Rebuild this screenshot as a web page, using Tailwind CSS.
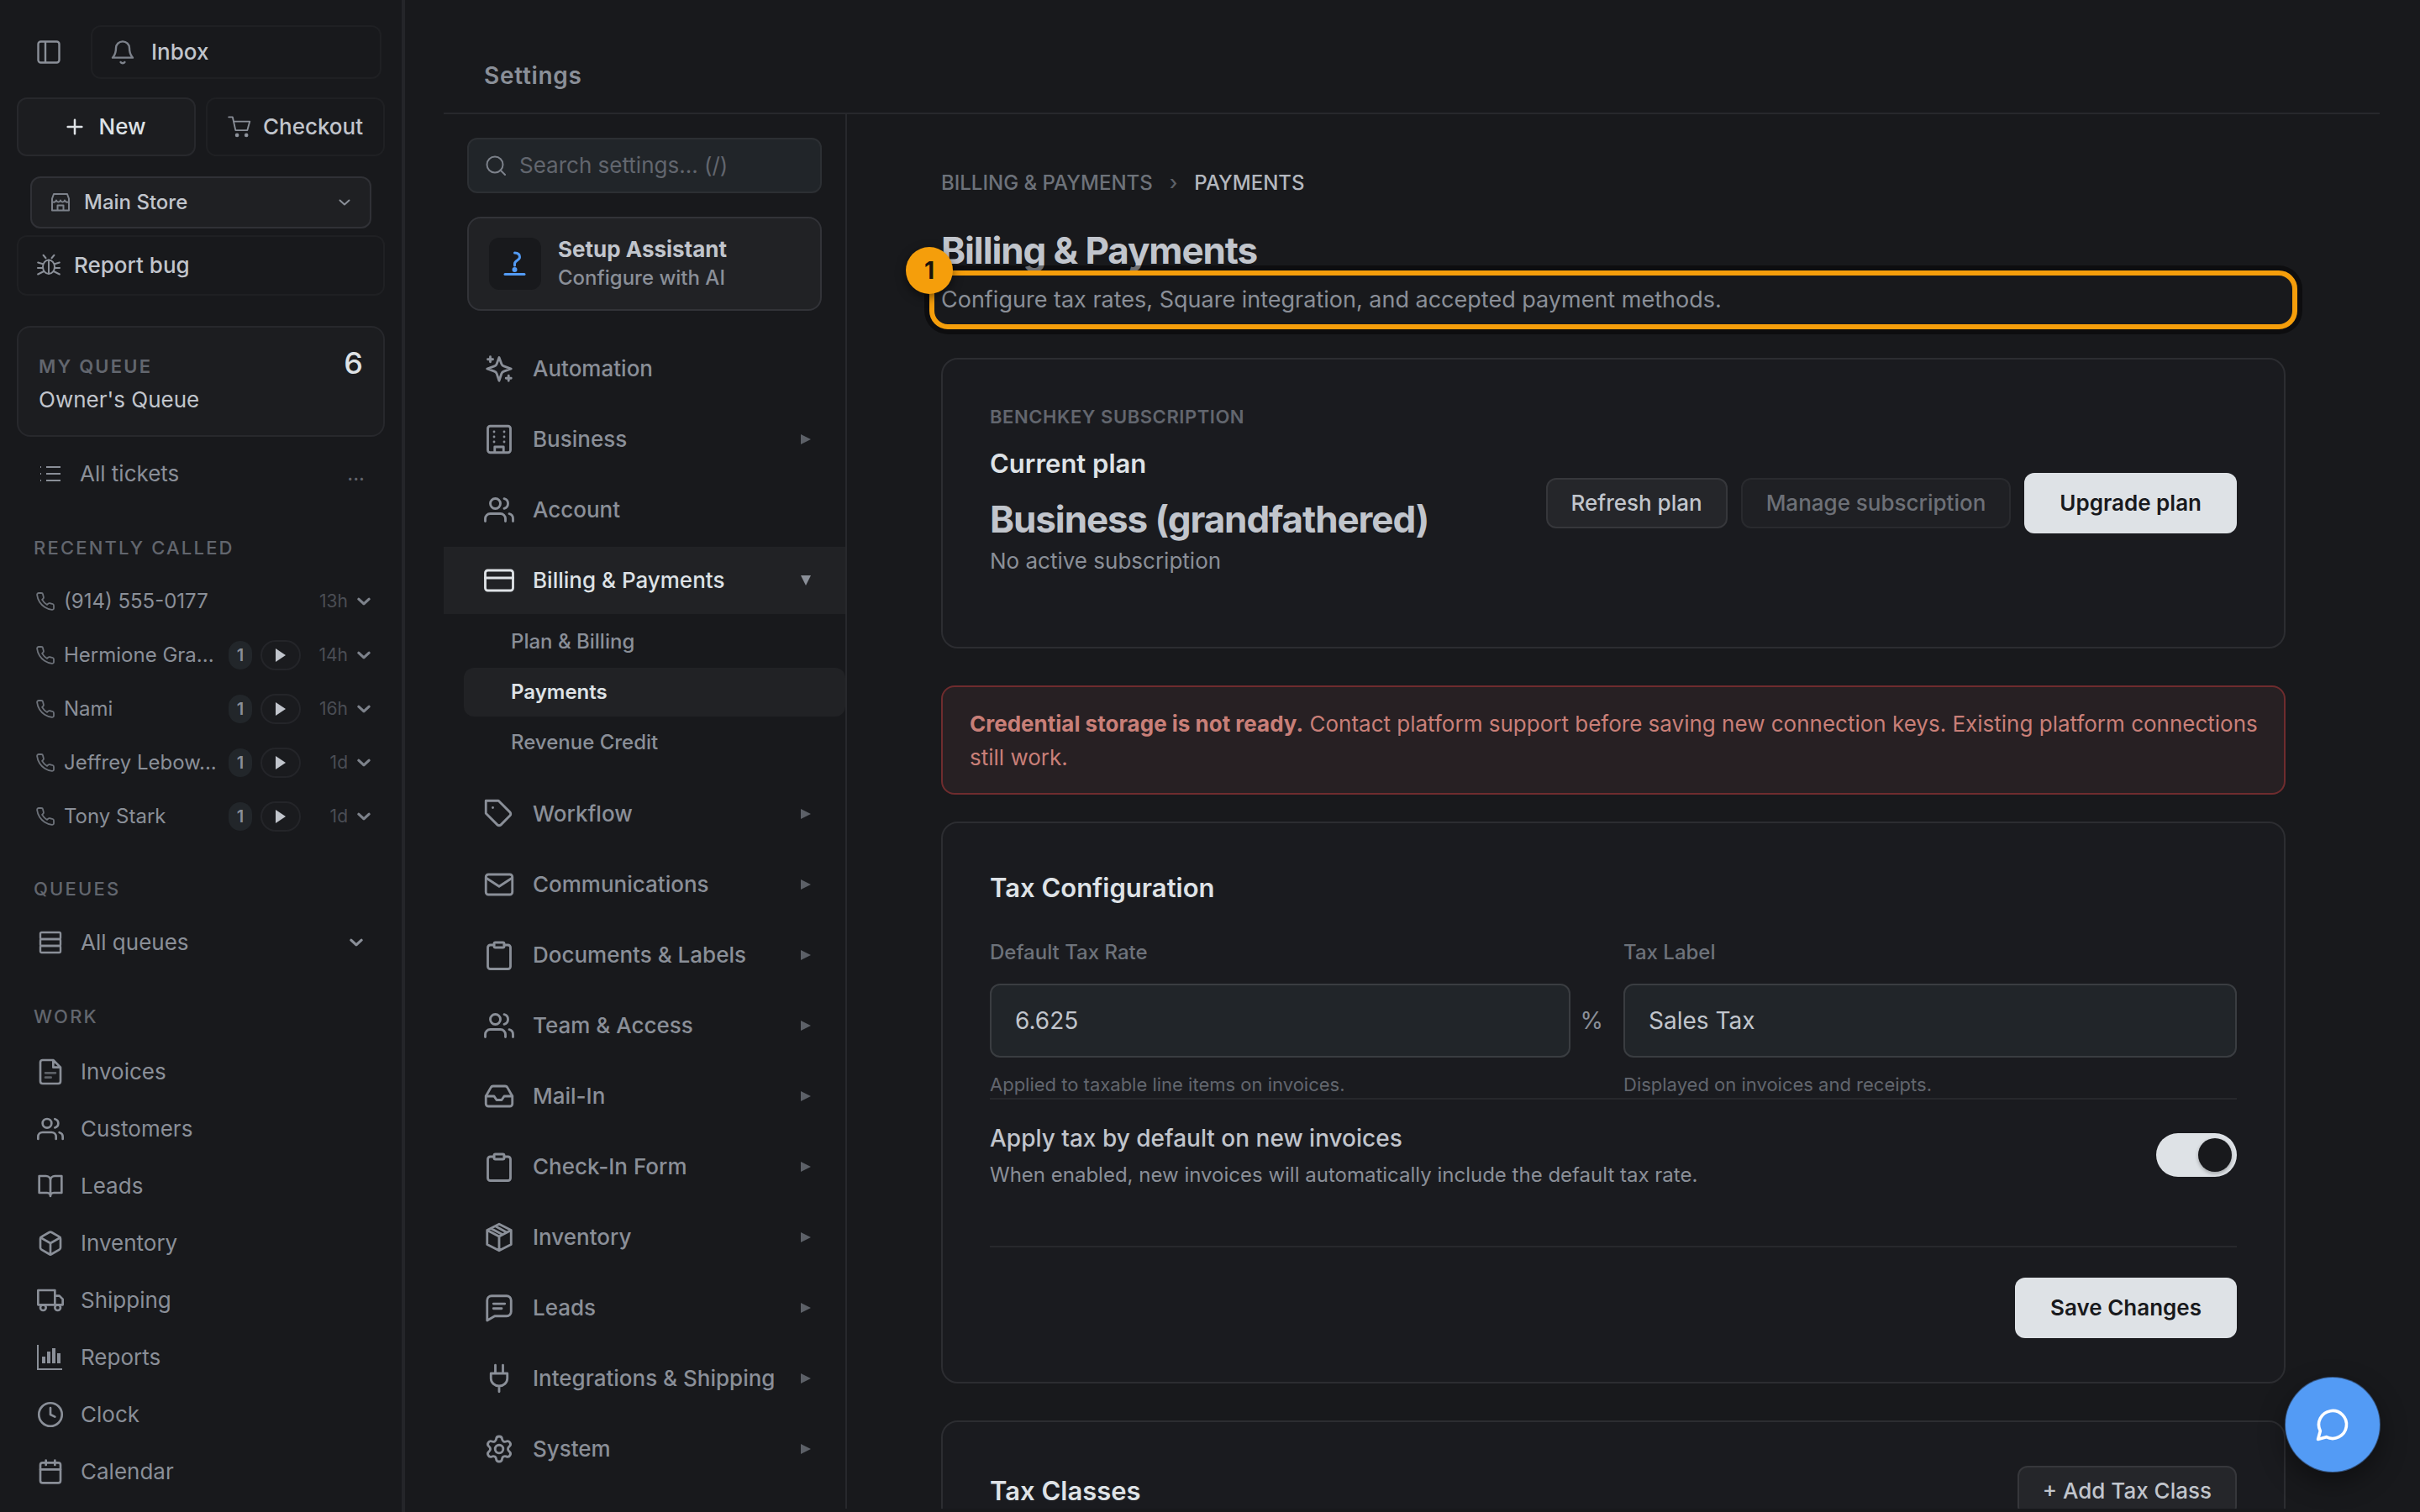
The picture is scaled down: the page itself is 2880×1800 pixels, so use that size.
<!DOCTYPE html>
<html lang="en">
<head>
<meta charset="utf-8">
<meta name="viewport" content="width=device-width, initial-scale=1">
<title>Billing &amp; Payments – Settings</title>
<script src="https://cdn.jsdelivr.net/npm/@tailwindcss/browser@4"></script>
</head>
<body class="bg-[#18191c] font-[Inter,sans-serif] text-[26px] leading-9 text-[#8a8f98] antialiased">

<!-- Icon sprite -->
<svg class="hidden" aria-hidden="true">
  <symbol id="panel" viewBox="0 0 28 28"><rect x="1.500" y="1.500" width="25" height="25" rx="3"/><path d="M10 2v24"/></symbol>
  <symbol id="bell" viewBox="0 0 24 24"><path d="M6 8.500a6 6 0 0 1 12 0c0 5.500 1.500 6.500 3 8.500H3c1.500-2 3-3 3-8.500M10.200 21a2.200 2.200 0 0 0 3.600 0"/></symbol>
  <symbol id="plus" viewBox="0 0 24 24"><path d="M12 2v20M2 12h20"/></symbol>
  <symbol id="cart" viewBox="0 0 24 24"><path d="M1 2h4l3 13.500h12L22.500 6.500H6.200"/><circle cx="9.500" cy="20.500" r="1.200" fill="currentColor"/><circle cx="19" cy="20.500" r="1.200" fill="currentColor"/></symbol>
  <symbol id="store" viewBox="0 0 24 24"><path d="M4 2h16l2 5.500v3.500a3.300 3.300 0 0 1-5-1.500c-1 2.500-4 2.500-5 0-1 2.500-4 2.500-5 0a3.300 3.300 0 0 1-5 1.500V7.500zM2 10v11.500h20V10M8.500 21.500v-6h7v6"/></symbol>
  <symbol id="bug" viewBox="0 0 24 24"><ellipse cx="12" cy="13.500" rx="6" ry="7"/><path d="M12 6.500v14M9 4.500 6.500 1.500M15 4.500l2.500-3M6 10.500 1 9M18 10.500 23 9M6 14.500H.800M18 14.500h5.200M7 18l-6 3M17 18l6 3"/></symbol>
  <symbol id="list" viewBox="0 0 26 20"><path d="M8 2h17M8 10h17M8 18h17M1 2h1M1 10h1M1 18h1"/></symbol>
  <symbol id="phone" viewBox="0 0 24 24"><path d="M22 16.920v3a2 2 0 0 1-2.180 2 19.790 19.790 0 0 1-8.630-3.070 19.500 19.500 0 0 1-6-6 19.790 19.790 0 0 1-3.070-8.670A2 2 0 0 1 4.110 2h3a2 2 0 0 1 2 1.720c.127.960.361 1.903.700 2.810a2 2 0 0 1-.450 2.110L8.090 9.910a16 16 0 0 0 6 6l1.270-1.270a2 2 0 0 1 2.110-.450c.907.339 1.850.573 2.810.700A2 2 0 0 1 22 16.920z"/></symbol>
  <symbol id="chev" viewBox="0 0 16 16"><path d="m2.500 5.500 5.500 5 5.500-5"/></symbol>
  <symbol id="stack" viewBox="0 0 28 28"><rect x="2" y="2" width="24" height="8" rx="1.500"/><rect x="2" y="10" width="24" height="8" rx="1.500"/><rect x="2" y="18" width="24" height="8" rx="1.500"/></symbol>
  <symbol id="file" viewBox="0 0 24 24"><path d="M14.500 1.500H5a2 2 0 0 0-2 2v17a2 2 0 0 0 2 2h14a2 2 0 0 0 2-2V8zM14.500 1.500V8H21"/><path d="M7.500 13h9M7.500 17h5" opacity=".6"/></symbol>
  <symbol id="users" viewBox="0 0 24 24"><path d="M17 21v-2a4 4 0 0 0-4-4H5a4 4 0 0 0-4 4v2"/><circle cx="9" cy="7" r="4"/><path d="M23 21v-2a4 4 0 0 0-3-3.870M16 3.130a4 4 0 0 1 0 7.750"/></symbol>
  <symbol id="book" viewBox="0 0 24 24"><path d="M2 3h6a4 4 0 0 1 4 4v14a3 3 0 0 0-3-3H2zM22 3h-6a4 4 0 0 0-4 4v14a3 3 0 0 1 3-3h7z"/></symbol>
  <symbol id="box" viewBox="0 0 24 24"><path d="M21 16V8a2 2 0 0 0-1-1.730l-7-4a2 2 0 0 0-2 0l-7 4A2 2 0 0 0 3 8v8a2 2 0 0 0 1 1.730l7 4a2 2 0 0 0 2 0l7-4A2 2 0 0 0 21 16z"/><path d="M3.270 6.960 12 12.010l8.730-5.050M12 22.080V12"/></symbol>
  <symbol id="truck" viewBox="0 0 24 24"><path d="M1 3h15v13H1zM16 8h4l3 3v5h-7z"/><circle cx="5.500" cy="18.500" r="2.500"/><circle cx="18.500" cy="18.500" r="2.500"/></symbol>
  <symbol id="bars" viewBox="0 0 32 32"><path d="M1 1v29h29" stroke-width="2" stroke-linecap="butt" stroke-linejoin="miter"/><path d="M6 15h4v8H6zM12 9h4v14h-4zM18 5h4v18h-4zM24 11h4v12h-4z" fill="currentColor" stroke="none"/></symbol>
  <symbol id="clock" viewBox="0 0 24 24"><circle cx="12" cy="12" r="10.300"/><path d="M12 6v6l4 2"/></symbol>
  <symbol id="cal" viewBox="0 0 24 24"><rect x="3" y="4" width="18" height="18" rx="2"/><path d="M16 2v4M8 2v4M3 10h18"/></symbol>
  <symbol id="search" viewBox="0 0 24 24"><circle cx="11" cy="11" r="9.500"/><path d="m23 23-5.500-5.500"/></symbol>
  <symbol id="assist" viewBox="0 0 32 32"><path d="M15.500 3c4 0 6 2 6 5 0 4-6 4-6 8v2"/><circle cx="15.500" cy="23" r="1.500" fill="currentColor"/><path d="M4 28.500h23"/></symbol>
  <symbol id="spark" viewBox="0 0 24 24"><path d="M12 3l1.900 5.100a3 3 0 0 0 1.800 1.800L21.500 12l-5.800 2.100a3 3 0 0 0-1.800 1.800L12 21.500l-1.900-5.600a3 3 0 0 0-1.800-1.800L2.500 12l5.800-2.100a3 3 0 0 0 1.800-1.800zM5 2.500v4M3 4.500h4M19.500 17.500v4M17.500 19.500h4"/></symbol>
  <symbol id="building" viewBox="0 0 24 24"><rect x="3" y="1.500" width="18" height="21" rx="2"/><path d="M8.500 22v-4h7v4M8 6h.010M8 10h.010M8 14h.010M16 6h.010M16 10h.010M16 14h.010"/></symbol>
  <symbol id="card" viewBox="0 0 24 24"><rect x="1" y="4" width="22" height="16" rx="2"/><path d="M1 10h22"/></symbol>
  <symbol id="tag" viewBox="0 0 24 24"><path d="M20.590 13.410l-7.170 7.170a2 2 0 0 1-2.830 0L1.500 11.500v-10h10l9.090 9.080a2 2 0 0 1 0 2.830zM7 7h.010"/></symbol>
  <symbol id="mail" viewBox="0 0 24 24"><rect x="1.500" y="4" width="21" height="16" rx="2"/><path d="M2 7l10 6.500L22 7"/></symbol>
  <symbol id="clip" viewBox="0 0 24 24"><path d="M16 4h3a2 2 0 0 1 2 2v15a2 2 0 0 1-2 2H5a2 2 0 0 1-2-2V6a2 2 0 0 1 2-2h3"/><rect x="8" y="2" width="8" height="4" rx="1"/></symbol>
  <symbol id="tray" viewBox="0 0 24 24"><path d="M22.500 12H16l-2 3h-4l-2-3H1.500"/><path d="M5.450 5.110 1.500 12v6a2 2 0 0 0 2 2h17a2 2 0 0 0 2-2v-6l-3.950-6.890A2 2 0 0 0 16.760 4H7.240a2 2 0 0 0-1.790 1.110z"/></symbol>
  <symbol id="package" viewBox="0 0 24 24"><path d="M12 1.500l9.500 4.800v11.400L12 22.500l-9.500-4.800V6.300zM2.500 6.300 12 11.300l9.500-5M12 11.300v11.200M9 3.200l9.200 4.900M5.500 5l9.300 4.900"/></symbol>
  <symbol id="message" viewBox="0 0 24 24"><path d="M6 2.500h12A3.500 3.500 0 0 1 21.500 6v9a3.500 3.500 0 0 1-3.500 3.500H8.500l-6 3.500V6A3.500 3.500 0 0 1 6 2.500zM7.500 8.700h9M7.500 12.500h6.500"/></symbol>
  <symbol id="plug" viewBox="0 0 24 24"><path d="M9 1.500V8M15 1.500V8M5.500 8h13v4a6.500 6 0 0 1-13 0zM12 18v4.500"/></symbol>
  <symbol id="gear" viewBox="0 0 24 24"><path d="M9.671 4.136a2.340 2.340 0 0 1 4.659 0 2.340 2.340 0 0 0 3.319 1.915 2.340 2.340 0 0 1 2.330 4.033 2.340 2.340 0 0 0 0 3.831 2.340 2.340 0 0 1-2.330 4.033 2.340 2.340 0 0 0-3.319 1.915 2.340 2.340 0 0 1-4.659 0 2.340 2.340 0 0 0-3.320-1.915 2.340 2.340 0 0 1-2.330-4.033 2.340 2.340 0 0 0 0-3.831A2.340 2.340 0 0 1 6.350 6.051a2.340 2.340 0 0 0 3.319-1.915"/><circle cx="12" cy="12" r="3.200"/></symbol>
  <symbol id="chat" viewBox="0 0 24 24"><path d="M7.900 20A9 9 0 1 0 4 16.100L2.500 21.500z"/></symbol>
  <symbol id="right" viewBox="0 0 12 12"><path d="M0 0v12l12-6z"/></symbol>
  <symbol id="down" viewBox="0 0 12 12"><path d="M0 0h12L6 12z"/></symbol>
</svg>

<div class="flex h-screen overflow-hidden">

  <!-- App sidebar -->
  <aside class="flex w-[482px] shrink-0 flex-col overflow-hidden border-r-4 border-[#242529] px-5 pt-[30px]">
    <div class="flex shrink-0 items-center gap-9 pr-1 pl-6">
      <button type="button" aria-label="Toggle sidebar"><svg class="size-7 fill-none stroke-current stroke-[2.400]"><use href="#panel"/></svg></button>
      <button type="button" class="flex h-16 flex-1 items-center gap-[18px] rounded-xl border-2 border-[#1f2023] px-5 font-medium text-[#c1c5cc]">
        <svg class="size-8 fill-none stroke-[#7d828b] stroke-[1.800] [stroke-linecap:round] [stroke-linejoin:round]"><use href="#bell"/></svg>Inbox</button>
    </div>

    <div class="mt-[22px] flex shrink-0 gap-3">
      <button type="button" class="flex h-[70px] flex-1 items-center justify-center gap-[18px] rounded-xl border-2 border-[#27282c] bg-[#1c1d20] font-medium text-[#dee2e6]">
        <svg class="size-5 fill-none stroke-current stroke-3 [stroke-linecap:round]"><use href="#plus"/></svg>New</button>
      <button type="button" class="flex h-[70px] flex-1 items-center justify-center gap-3.5 rounded-xl border-2 border-[#1f2023] font-medium text-[#c1c5cc]">
        <svg class="size-7 fill-none stroke-[#8a8f98] stroke-[1.600] [stroke-linecap:round] [stroke-linejoin:round]"><use href="#cart"/></svg>Checkout</button>
    </div>

    <button type="button" class="mx-4 mt-6 flex h-[62px] shrink-0 items-center rounded-xl border-2 border-[#303136] bg-[#1f2023] px-[22px] text-2xl font-medium text-[#c1c5cc]">
      <svg class="mr-4 size-6 fill-none stroke-[#7d828b] stroke-2 [stroke-linejoin:round]"><use href="#store"/></svg>Main Store
      <svg class="ml-auto size-4 fill-none stroke-[#8a8f98] stroke-2 [stroke-linecap:round] [stroke-linejoin:round]"><use href="#chev"/></svg></button>

    <button type="button" class="mt-2 flex h-[72px] shrink-0 items-center gap-4 rounded-xl border-2 border-[#1f2023] px-[22px] font-medium text-[#c1c5cc]">
      <svg class="size-7 fill-none stroke-[#8a8f98] stroke-[1.700] [stroke-linecap:round]"><use href="#bug"/></svg>Report bug</button>

    <a href="#my-queue" class="mt-9 flex h-[132px] shrink-0 items-start justify-between rounded-2xl border-2 border-[#27282c] bg-[#1c1d20] px-6 pt-5">
      <span class="flex flex-col gap-2 pt-3">
        <span class="text-[22px] leading-7 font-semibold tracking-widest text-[#62666e]">MY QUEUE</span>
        <span class="text-[#c1c5cc]">Owner's Queue</span>
      </span>
      <span class="text-4xl leading-11 font-medium text-[#dee2e6]">6</span>
    </a>

    <a href="#tickets" class="mt-3 flex h-16 shrink-0 items-center pr-6 pl-[27px]">
      <svg class="mr-[22px] h-5 w-[26px] fill-none stroke-current stroke-2"><use href="#list"/></svg>All tickets
      <span class="ml-auto text-2xl text-[#62666e]">...</span></a>

    <h2 class="mt-[42px] ml-5 shrink-0 text-[22px] leading-7 font-medium tracking-widest text-[#62666e]">RECENTLY CALLED</h2>
    <ul class="mt-[18px] shrink-0 text-2xl">
      <li class="flex h-16 items-center pr-4 pl-[22px]">
        <svg class="mr-2.5 size-6 fill-none stroke-[#6d727a] stroke-[1.800] [stroke-linejoin:round]"><use href="#phone"/></svg>
        <a href="#c1" class="flex-1 whitespace-nowrap">(914) 555-0177</a>
        <span class="w-14 text-right text-[21px] text-[#4a4d54]">13h</span>
        <button type="button" aria-label="More" class="ml-2.5"><svg class="size-[18px] fill-none stroke-[#7d828b] stroke-[2.800] [stroke-linecap:round] [stroke-linejoin:round]"><use href="#chev"/></svg></button>
      </li>
      <li class="flex h-16 items-center pr-4 pl-[22px]">
        <svg class="mr-2.5 size-6 fill-none stroke-[#6d727a] stroke-[1.800] [stroke-linejoin:round]"><use href="#phone"/></svg>
        <a href="#c2" class="flex-1 whitespace-nowrap">Hermione Gra...</a>
        <span class="flex h-[34px] w-7 items-center justify-center rounded-full bg-[#22262a] text-xl font-semibold">1</span>
        <button type="button" aria-label="Play" class="ml-2.5 flex h-9 w-12 items-center justify-center rounded-full border-2 border-[#242529] bg-[#1a1b1e]"><svg class="h-4 w-3 fill-[#c1c5cc]" viewBox="0 0 12 16"><path d="M0 0v16l12-8z"/></svg></button>
        <span class="w-14 text-right text-[21px] text-[#4a4d54]">14h</span>
        <button type="button" aria-label="More" class="ml-2.5"><svg class="size-[18px] fill-none stroke-[#7d828b] stroke-[2.800] [stroke-linecap:round] [stroke-linejoin:round]"><use href="#chev"/></svg></button>
      </li>
      <li class="flex h-16 items-center pr-4 pl-[22px]">
        <svg class="mr-2.5 size-6 fill-none stroke-[#6d727a] stroke-[1.800] [stroke-linejoin:round]"><use href="#phone"/></svg>
        <a href="#c3" class="flex-1 whitespace-nowrap">Nami</a>
        <span class="flex h-[34px] w-7 items-center justify-center rounded-full bg-[#22262a] text-xl font-semibold">1</span>
        <button type="button" aria-label="Play" class="ml-2.5 flex h-9 w-12 items-center justify-center rounded-full border-2 border-[#242529] bg-[#1a1b1e]"><svg class="h-4 w-3 fill-[#c1c5cc]" viewBox="0 0 12 16"><path d="M0 0v16l12-8z"/></svg></button>
        <span class="w-14 text-right text-[21px] text-[#4a4d54]">16h</span>
        <button type="button" aria-label="More" class="ml-2.5"><svg class="size-[18px] fill-none stroke-[#7d828b] stroke-[2.800] [stroke-linecap:round] [stroke-linejoin:round]"><use href="#chev"/></svg></button>
      </li>
      <li class="flex h-16 items-center pr-4 pl-[22px]">
        <svg class="mr-2.5 size-6 fill-none stroke-[#6d727a] stroke-[1.800] [stroke-linejoin:round]"><use href="#phone"/></svg>
        <a href="#c4" class="flex-1 whitespace-nowrap">Jeffrey Lebow...</a>
        <span class="flex h-[34px] w-7 items-center justify-center rounded-full bg-[#22262a] text-xl font-semibold">1</span>
        <button type="button" aria-label="Play" class="ml-2.5 flex h-9 w-12 items-center justify-center rounded-full border-2 border-[#242529] bg-[#1a1b1e]"><svg class="h-4 w-3 fill-[#c1c5cc]" viewBox="0 0 12 16"><path d="M0 0v16l12-8z"/></svg></button>
        <span class="w-14 text-right text-[21px] text-[#4a4d54]">1d</span>
        <button type="button" aria-label="More" class="ml-2.5"><svg class="size-[18px] fill-none stroke-[#7d828b] stroke-[2.800] [stroke-linecap:round] [stroke-linejoin:round]"><use href="#chev"/></svg></button>
      </li>
      <li class="flex h-16 items-center pr-4 pl-[22px]">
        <svg class="mr-2.5 size-6 fill-none stroke-[#6d727a] stroke-[1.800] [stroke-linejoin:round]"><use href="#phone"/></svg>
        <a href="#c5" class="flex-1 whitespace-nowrap">Tony Stark</a>
        <span class="flex h-[34px] w-7 items-center justify-center rounded-full bg-[#22262a] text-xl font-semibold">1</span>
        <button type="button" aria-label="Play" class="ml-2.5 flex h-9 w-12 items-center justify-center rounded-full border-2 border-[#242529] bg-[#1a1b1e]"><svg class="h-4 w-3 fill-[#c1c5cc]" viewBox="0 0 12 16"><path d="M0 0v16l12-8z"/></svg></button>
        <span class="w-14 text-right text-[21px] text-[#4a4d54]">1d</span>
        <button type="button" aria-label="More" class="ml-2.5"><svg class="size-[18px] fill-none stroke-[#7d828b] stroke-[2.800] [stroke-linecap:round] [stroke-linejoin:round]"><use href="#chev"/></svg></button>
      </li>
    </ul>

    <h2 class="mt-10 ml-5 shrink-0 text-[22px] leading-7 font-medium tracking-widest text-[#62666e]">QUEUES</h2>
    <button type="button" class="mt-[18px] flex h-16 shrink-0 items-center pr-[25px] pl-[26px]">
      <svg class="mr-[22px] size-7 fill-none stroke-current stroke-[2.400]"><use href="#stack"/></svg>All queues
      <svg class="ml-auto size-[18px] fill-none stroke-current stroke-[2.800] [stroke-linecap:round] [stroke-linejoin:round]"><use href="#chev"/></svg></button>

    <h2 class="mt-[42px] ml-5 shrink-0 text-[22px] leading-7 font-medium tracking-widest text-[#62666e]">WORK</h2>
    <nav aria-label="Work" class="mt-[18px] flex shrink-0 flex-col fill-none stroke-2 [stroke-linecap:round] [stroke-linejoin:round]">
      <a href="#invoices" class="flex h-[68px] items-center gap-5 pl-6"><svg class="size-8 stroke-current"><use href="#file"/></svg>Invoices</a>
      <a href="#customers" class="flex h-[68px] items-center gap-5 pl-6"><svg class="size-8 stroke-current"><use href="#users"/></svg>Customers</a>
      <a href="#leads" class="flex h-[68px] items-center gap-5 pl-6"><svg class="size-8 stroke-current"><use href="#book"/></svg>Leads</a>
      <a href="#inventory" class="flex h-[68px] items-center gap-5 pl-6"><svg class="size-8 stroke-current"><use href="#box"/></svg>Inventory</a>
      <a href="#shipping" class="flex h-[68px] items-center gap-5 pl-6"><svg class="size-8 stroke-current"><use href="#truck"/></svg>Shipping</a>
      <a href="#reports" class="flex h-[68px] items-center gap-5 pl-6"><svg class="size-8 stroke-current"><use href="#bars"/></svg>Reports</a>
      <a href="#clock-in" class="flex h-[68px] items-center gap-5 pl-6"><svg class="size-8 stroke-current"><use href="#clock"/></svg>Clock</a>
      <a href="#calendar" class="flex h-[68px] items-center gap-5 pl-6"><svg class="size-8 stroke-current"><use href="#cal"/></svg>Calendar</a>
    </nav>
  </aside>

  <!-- Settings -->
  <div class="flex min-w-0 flex-1 flex-col pr-12 pb-1 pl-[46px]">
    <header class="shrink-0 border-b-2 border-[#27282c] pt-[70px] pb-6 pl-12 text-[28px] leading-10 font-semibold tracking-wide">Settings</header>

    <div class="flex min-h-0 flex-1">
      <div class="flex w-[480px] shrink-0 flex-col overflow-hidden border-r-2 border-[#27282c] pt-7">
        <label class="mx-7 flex h-[66px] shrink-0 items-center gap-4 rounded-xl border-2 border-[#2c2f33] bg-[#212529] px-5">
          <svg class="size-6 shrink-0 fill-none stroke-[#7d828b] stroke-2 [stroke-linecap:round]"><use href="#search"/></svg>
          <input type="search" aria-label="Search settings" placeholder="Search settings... (/)" class="w-full min-w-0 bg-transparent outline-none placeholder:text-[#62666e]">
        </label>
        <button type="button" class="mx-7 mt-7 flex h-28 shrink-0 items-center gap-5 rounded-2xl border-2 border-[#323338] bg-[#212225] px-6 text-left">
          <span class="flex size-[62px] items-center justify-center rounded-xl bg-[#18191c] text-[#539bf5]"><svg class="size-8 fill-none stroke-current stroke-3 [stroke-linecap:round] [stroke-linejoin:round]"><use href="#assist"/></svg></span>
          <span class="flex flex-col"><span class="leading-[34px] font-bold text-[#c1c5cc]">Setup Assistant</span><span class="text-2xl leading-[34px] font-medium">Configure with AI</span></span>
        </button>

        <nav aria-label="Settings" class="mt-[29px] flex flex-col gap-1 fill-none stroke-[1.900] font-medium [stroke-linecap:round] [stroke-linejoin:round]">
          <a href="#s1" class="flex h-20 shrink-0 items-center gap-[22px] pr-[41px] pl-12"><svg class="size-9 stroke-current"><use href="#spark"/></svg>Automation</a>
          <a href="#s2" class="flex h-20 shrink-0 items-center gap-[22px] pr-[41px] pl-12"><svg class="size-9 stroke-current"><use href="#building"/></svg>Business<svg class="ml-auto size-3 fill-[#5c6067]"><use href="#right"/></svg></a>
          <a href="#s3" class="flex h-20 shrink-0 items-center gap-[22px] pr-[41px] pl-12"><svg class="size-9 stroke-current"><use href="#users"/></svg>Account</a>
          <a href="#s4" class="flex h-20 shrink-0 items-center gap-[22px] bg-[#212225] pr-[41px] pl-12 text-[#dee2e6]"><svg class="size-9 stroke-current"><use href="#card"/></svg>Billing &amp; Payments<svg class="ml-auto size-3 fill-[#8a8f98]"><use href="#down"/></svg></a>
          <div class="ml-6 flex shrink-0 flex-col gap-0.5 pb-3 text-2xl">
            <a href="#s41" class="flex h-[58px] items-center pl-14">Plan &amp; Billing</a>
            <a href="#s42" aria-current="page" class="flex h-[58px] items-center rounded-xl bg-[#212225] pl-14 font-semibold text-[#dee2e6]">Payments</a>
            <a href="#s43" class="flex h-[58px] items-center pl-14">Revenue Credit</a>
          </div>
          <a href="#s5" class="flex h-20 shrink-0 items-center gap-[22px] pr-[41px] pl-12"><svg class="size-9 stroke-current"><use href="#tag"/></svg>Workflow<svg class="ml-auto size-3 fill-[#5c6067]"><use href="#right"/></svg></a>
          <a href="#s6" class="flex h-20 shrink-0 items-center gap-[22px] pr-[41px] pl-12"><svg class="size-9 stroke-current"><use href="#mail"/></svg>Communications<svg class="ml-auto size-3 fill-[#5c6067]"><use href="#right"/></svg></a>
          <a href="#s7" class="flex h-20 shrink-0 items-center gap-[22px] pr-[41px] pl-12"><svg class="size-9 stroke-current"><use href="#clip"/></svg>Documents &amp; Labels<svg class="ml-auto size-3 fill-[#5c6067]"><use href="#right"/></svg></a>
          <a href="#s8" class="flex h-20 shrink-0 items-center gap-[22px] pr-[41px] pl-12"><svg class="size-9 stroke-current"><use href="#users"/></svg>Team &amp; Access<svg class="ml-auto size-3 fill-[#5c6067]"><use href="#right"/></svg></a>
          <a href="#s9" class="flex h-20 shrink-0 items-center gap-[22px] pr-[41px] pl-12"><svg class="size-9 stroke-current"><use href="#tray"/></svg>Mail-In<svg class="ml-auto size-3 fill-[#5c6067]"><use href="#right"/></svg></a>
          <a href="#s10" class="flex h-20 shrink-0 items-center gap-[22px] pr-[41px] pl-12"><svg class="size-9 stroke-current"><use href="#clip"/></svg>Check-In Form<svg class="ml-auto size-3 fill-[#5c6067]"><use href="#right"/></svg></a>
          <a href="#s11" class="flex h-20 shrink-0 items-center gap-[22px] pr-[41px] pl-12"><svg class="size-9 stroke-current"><use href="#package"/></svg>Inventory<svg class="ml-auto size-3 fill-[#5c6067]"><use href="#right"/></svg></a>
          <a href="#s12" class="flex h-20 shrink-0 items-center gap-[22px] pr-[41px] pl-12"><svg class="size-9 stroke-current"><use href="#message"/></svg>Leads<svg class="ml-auto size-3 fill-[#5c6067]"><use href="#right"/></svg></a>
          <a href="#s13" class="flex h-20 shrink-0 items-center gap-[22px] pr-[41px] pl-12"><svg class="size-9 stroke-current"><use href="#plug"/></svg>Integrations &amp; Shipping<svg class="ml-auto size-3 fill-[#5c6067]"><use href="#right"/></svg></a>
          <a href="#s14" class="flex h-20 shrink-0 items-center gap-[22px] pr-[41px] pl-12"><svg class="size-9 stroke-current"><use href="#gear"/></svg>System<svg class="ml-auto size-3 fill-[#5c6067]"><use href="#right"/></svg></a>
        </nav>
      </div>

      <main class="min-w-0 flex-1 overflow-hidden">
        <div class="mx-auto max-w-[1600px] pt-[66px]">
          <nav aria-label="Breadcrumb" class="flex gap-5 text-2xl leading-8 font-medium text-[#6d727a]">
            <a href="#billing">BILLING &amp; PAYMENTS</a><span class="text-[#5c6067]">›</span><span class="text-[#b4b8bf]">PAYMENTS</span>
          </nav>
          <h1 class="mt-[38px] text-[44px] leading-[52px] font-bold tracking-tight text-[#c1c5cc]">Billing &amp; Payments</h1>
          <div class="relative mt-3">
            <p class="text-[27px] leading-[42px]">Configure tax rates, Square integration, and accepted payment methods.</p>
            <div class="pointer-events-none absolute -inset-3.5 rounded-[22px] border-6 border-[#f59e0b] shadow-[0_0_0_6px_rgba(0,0,0,0.450)]"></div>
            <div class="absolute -top-[42px] -left-[42px] flex size-14 items-center justify-center rounded-full bg-[#f59e0b] text-[28px] font-bold text-[#18130a] shadow-[0_4px_12px_rgba(0,0,0,0.500)]">1</div>
          </div>

          <section class="mt-12 flex min-h-[346px] items-center justify-between rounded-[20px] border-2 border-[#2c2d31] bg-[#1a1b1f] px-14">
            <div class="pb-[30px]">
              <p class="text-[22px] leading-7 font-semibold tracking-wide text-[#62666e]">BENCHKEY SUBSCRIPTION</p>
              <h2 class="mt-5 text-[31px] leading-11 font-semibold text-[#dee2e6]">Current plan</h2>
              <p class="mt-4 text-[44px] leading-[56px] font-bold tracking-tight text-[#c1c5cc]">Business (grandfathered)</p>
              <p class="mt-1">No active subscription</p>
            </div>
            <div class="flex items-center gap-4">
              <button type="button" class="h-[60px] rounded-xl border-2 border-[#36373b] bg-[#25262a] px-7 font-medium text-[#c1c5cc]">Refresh plan</button>
              <button type="button" disabled class="h-[60px] rounded-xl border-2 border-[#292a2e] bg-[#1f2024] px-7 font-medium text-[#6d7077]">Manage subscription</button>
              <button type="button" class="h-[72px] rounded-xl bg-[#dee2e6] px-[42px] font-semibold text-[#18191c]">Upgrade plan</button>
            </div>
          </section>

          <div role="alert" class="mt-11 rounded-2xl border-2 border-[#6f2c2e] bg-[#272023] pt-6 pr-3 pb-[22px] pl-8 leading-10 text-[#c97f78]"><strong class="font-bold">Credential storage is not ready.</strong> Contact platform support before saving new connection keys. Existing platform connections still work.</div>

          <section class="mt-8 rounded-[20px] border-2 border-[#2c2d31] bg-[#1a1b1f] px-14 pt-[55px] pb-[52px]">
            <h2 class="text-[31px] leading-11 font-semibold text-[#dee2e6]">Tax Configuration</h2>
            <div class="mt-[38px] grid grid-cols-2 gap-x-6">
              <div>
                <label for="rate" class="block text-2xl leading-[34px] font-medium text-[#6d727a]">Default Tax Rate</label>
                <div class="mt-5 flex items-center gap-3 text-[28px]">
                  <input id="rate" type="text" value="6.625" class="h-[88px] min-w-0 flex-1 rounded-xl border-2 border-[#3a3d41] bg-[#212529] px-7 text-[#c1c5cc]">%
                </div>
                <p class="mt-4 text-[22px] leading-8 text-[#62666e]">Applied to taxable line items on invoices.</p>
              </div>
              <div>
                <label for="taxlabel" class="block text-2xl leading-[34px] font-medium text-[#6d727a]">Tax Label</label>
                <input id="taxlabel" type="text" value="Sales Tax" class="mt-5 h-[88px] w-full rounded-xl border-2 border-[#3a3d41] bg-[#212529] px-7 text-[28px] text-[#c1c5cc]">
                <p class="mt-4 text-[22px] leading-8 text-[#62666e]">Displayed on invoices and receipts.</p>
              </div>
            </div>
            <label class="flex items-center justify-between border-y-2 border-[#27282c] pt-6 pb-[66px]">
              <span class="flex flex-col gap-1">
                <span class="text-[28px] leading-11 font-medium text-[#c1c5cc]">Apply tax by default on new invoices</span>
                <span class="text-2xl leading-9">When enabled, new invoices will automatically include the default tax rate.</span>
              </span>
              <input type="checkbox" role="switch" checked class="flex h-[52px] w-24 appearance-none items-center rounded-full bg-[#dee2e6] px-1.5 before:size-10 before:rounded-full before:bg-[#18191c] before:shadow-[0_2px_4px_rgba(0,0,0,0.300)] checked:justify-end">
            </label>
            <div class="flex justify-end pt-9">
              <button type="button" class="h-[72px] rounded-xl bg-[#dee2e6] px-[42px] font-semibold text-[#18191c]">Save Changes</button>
            </div>
          </section>

          <section class="mt-11 flex items-center justify-between rounded-[20px] border-2 border-[#2c2d31] bg-[#1a1b1f] px-14 py-[52px]">
            <h2 class="text-[31px] leading-11 font-semibold text-[#dee2e6]">Tax Classes</h2>
            <button type="button" class="h-[60px] rounded-xl border-2 border-[#36373b] bg-[#25262a] px-7 font-medium text-[#c1c5cc]">+ Add Tax Class</button>
          </section>
        </div>
      </main>
    </div>
  </div>
</div>

<button type="button" aria-label="Open chat" class="fixed right-12 bottom-12 flex size-28 items-center justify-center rounded-full bg-[#539bf5] text-white shadow-[0_0_0_1px_#33527d,0_12px_32px_rgba(0,0,0,0.400)]">
  <svg class="size-11 fill-none stroke-current stroke-2 [stroke-linecap:round] [stroke-linejoin:round]"><use href="#chat"/></svg>
</button>
</body>
</html>
